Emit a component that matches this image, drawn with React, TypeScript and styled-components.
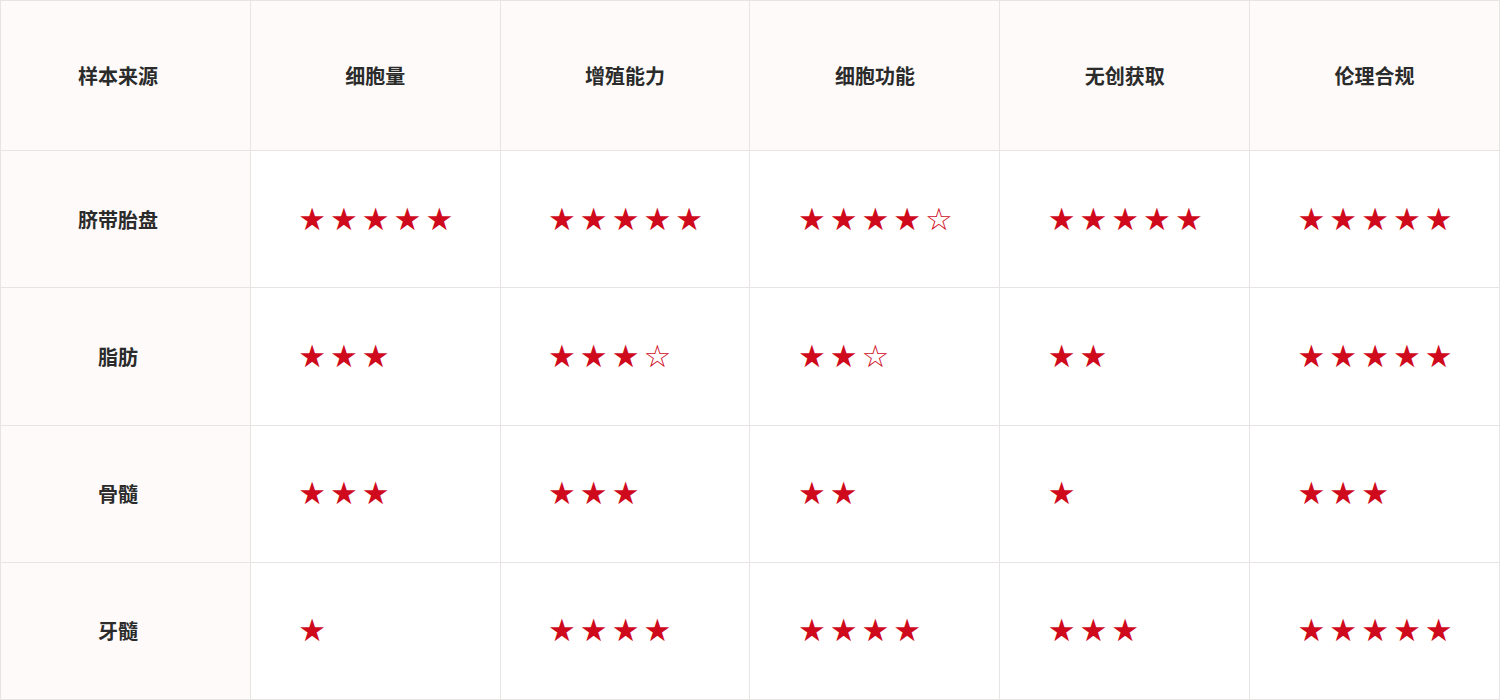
import React from "react";
import styled, { createGlobalStyle } from "styled-components";

const GlobalStyle = createGlobalStyle`
  html, body {
    margin: 0;
    padding: 0;
    background: #ffffff;
  }
  body {
    font-family: "Noto Sans CJK SC", "Noto Sans", sans-serif;
  }
`;

const columns = ["细胞量", "增殖能力", "细胞功能", "无创获取", "伦理合规"];

// [solid stars, hollow stars]
const rows = [
  { name: "脐带胎盘", scores: [[5, 0], [5, 0], [4, 1], [5, 0], [5, 0]] },
  { name: "脂肪", scores: [[3, 0], [3, 1], [2, 1], [2, 0], [5, 0]] },
  { name: "骨髓", scores: [[3, 0], [3, 0], [2, 0], [1, 0], [3, 0]] },
  { name: "牙髓", scores: [[1, 0], [4, 0], [4, 0], [3, 0], [5, 0]] },
];

const Table = styled.table`
  width: 1500px;
  height: 700px;
  border-collapse: collapse;
  table-layout: fixed;
`;

const HeadCell = styled.th<{ $first?: boolean }>`
  height: 149px;
  background: #fdfaf9;
  border: 1px solid #e8e4e4;
  font-size: 20px;
  font-weight: 700;
  color: #2b2b2b;
  text-align: center;
  vertical-align: middle;
  padding: 0 ${(p) => (p.$first ? "15px" : "0")} 0 0;
`;

const Row = styled.tr`
  height: 137px;
`;

const NameCell = styled.td`
  background: #fdfaf9;
  border: 1px solid #e8e4e4;
  font-size: 20px;
  font-weight: 700;
  color: #2b2b2b;
  text-align: center;
  vertical-align: middle;
  padding: 0 15px 0 0;
`;

const StarCell = styled.td`
  background: #ffffff;
  border: 1px solid #e8e4e4;
  text-align: center;
  vertical-align: middle;
  padding: 0;
`;

const Stars = styled.span`
  display: inline-block;
  width: 154px;
  text-align: left;
  white-space: nowrap;
  font-family: "DejaVu Sans", sans-serif;
  font-size: 31px;
  line-height: 1;
  letter-spacing: 4px;
  color: #cf0a1c;
`;

const StarRating = ({ full, half }: { full: number; half: number }) => (
  <Stars>
    {"★".repeat(full)}
    {"☆".repeat(half)}
  </Stars>
);

export default function App() {
  return (
    <>
      <GlobalStyle />
      <Table>
        <thead>
          <tr>
            <HeadCell $first>样本来源</HeadCell>
            {columns.map((c) => (
              <HeadCell key={c}>{c}</HeadCell>
            ))}
          </tr>
        </thead>
        <tbody>
          {rows.map((r) => (
            <Row key={r.name}>
              <NameCell>{r.name}</NameCell>
              {r.scores.map(([full, half], i) => (
                <StarCell key={i}>
                  <StarRating full={full} half={half} />
                </StarCell>
              ))}
            </Row>
          ))}
        </tbody>
      </Table>
    </>
  );
}
